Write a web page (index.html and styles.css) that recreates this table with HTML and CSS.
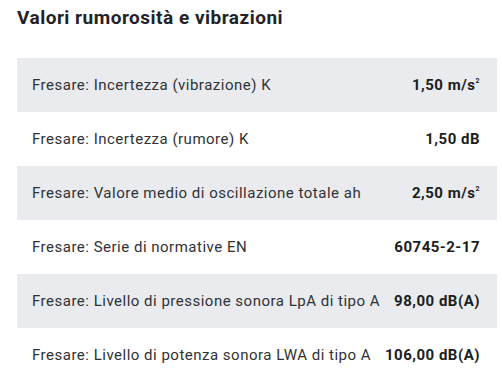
FILE: index.html
```html
<!DOCTYPE html>
<html lang="it">
<head>
  <meta charset="UTF-8" />
  <meta name="viewport" content="width=device-width, initial-scale=1.0"/>
  <title>Valori rumorosità e vibrazioni</title>
  <link rel="stylesheet" href="styles.css">
</head>
<body>

  <section class="specs">
    <h2>Valori rumorosità e vibrazioni</h2>

    <div class="spec-table">
      <div class="spec-row">
        <span class="spec-label">Fresare: Incertezza (vibrazione) K</span>
        <span class="spec-value">1,50 m/s<sup>2</sup></span>
      </div>
      <div class="spec-row">
        <span class="spec-label">Fresare: Incertezza (rumore) K</span>
        <span class="spec-value">1,50 dB</span>
      </div>
      <div class="spec-row">
        <span class="spec-label">Fresare: Valore medio di oscillazione totale ah</span>
        <span class="spec-value">2,50 m/s<sup>2</sup></span>
      </div>
      <div class="spec-row">
        <span class="spec-label">Fresare: Serie di normative EN</span>
        <span class="spec-value">60745-2-17</span>
      </div>
      <div class="spec-row">
        <span class="spec-label">Fresare: Livello di pressione sonora LpA di tipo A</span>
        <span class="spec-value">98,00 dB(A)</span>
      </div>
      <div class="spec-row">
        <span class="spec-label">Fresare: Livello di potenza sonora LWA di tipo A</span>
        <span class="spec-value">106,00 dB(A)</span>
      </div>
    </div>
  </section>

</body>
</html>
```

FILE: styles.css
```css
body {
  font-family: 'Roboto', 'Liberation Sans', sans-serif;
  background-color: #fff;
  color: #303236;
  margin: 0;
  padding: 0;
}

.specs {
  padding: 7px 5px 0 17px;
}

h2 {
  margin: 0 0 29px;
  font-size: 19px;
  font-weight: 700;
  line-height: 22px;
  letter-spacing: 0.5px;
  color: #1f2329;
}

.spec-row {
  display: flex;
  justify-content: space-between;
  align-items: center;
  gap: 12px;
  height: 54px;
  padding: 0 17px 0 15px;
  font-size: 15px;
  letter-spacing: 0.5px;
}

.spec-row:nth-child(odd) {
  background-color: #e9ebef;
}

.spec-value {
  font-weight: 700;
  color: #1b1d21;
  white-space: nowrap;
}

.spec-value sup {
  font-size: 7px;
  vertical-align: 7px;
  line-height: 0;
}
```
